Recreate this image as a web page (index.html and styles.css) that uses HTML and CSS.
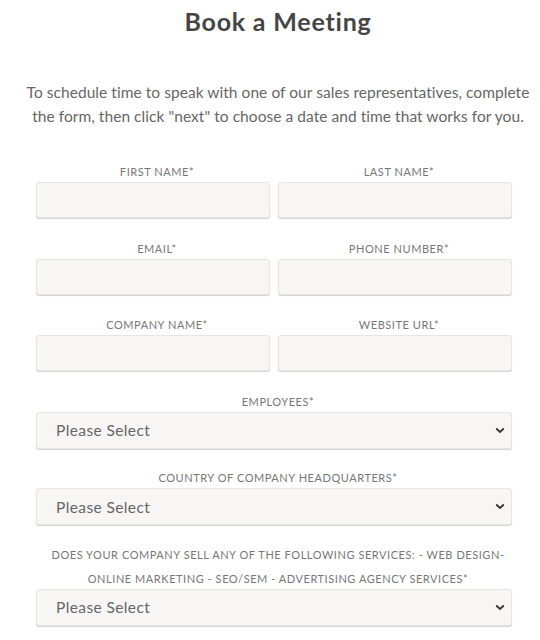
FILE: index.html
```html
<!DOCTYPE html>
<html lang="en">
<head>
<meta charset="utf-8">
<title>Book a Meeting</title>
<link rel="stylesheet" href="styles.css">
</head>
<body>
<div class="page">
  <header class="intro">
    <h1 class="title">Book a Meeting</h1>
    <p class="lead">To schedule time to speak with one of our sales representatives, complete the form, then click "next" to choose a date and time that works for you.</p>
  </header>
  <form class="form">
    <div class="row">
      <div class="field"><label class="label">First Name*</label><input class="input" type="text"></div>
      <div class="field"><label class="label">Last Name*</label><input class="input" type="text"></div>
    </div>
    <div class="row">
      <div class="field"><label class="label">Email*</label><input class="input" type="email"></div>
      <div class="field"><label class="label">Phone Number*</label><input class="input" type="tel"></div>
    </div>
    <div class="row">
      <div class="field"><label class="label">Company Name*</label><input class="input" type="text"></div>
      <div class="field"><label class="label">Website URL*</label><input class="input" type="text"></div>
    </div>
    <div class="field field-select">
      <label class="label">Employees*</label>
      <div class="select-wrap">
        <select class="select"><option>Please Select</option></select>
        <svg class="chev" width="10" height="7" viewBox="0 0 10 7"><path d="M1.2 1.5 L5 5 L8.8 1.5" fill="none" stroke="#333" stroke-width="1.8"/></svg>
      </div>
    </div>
    <div class="field field-select">
      <label class="label">Country of Company Headquarters*</label>
      <div class="select-wrap">
        <select class="select"><option>Please Select</option></select>
        <svg class="chev" width="10" height="7" viewBox="0 0 10 7"><path d="M1.2 1.5 L5 5 L8.8 1.5" fill="none" stroke="#333" stroke-width="1.8"/></svg>
      </div>
    </div>
    <div class="field field-select">
      <label class="label">Does your company sell any of the following services: - Web Design- Online Marketing - SEO/SEM - Advertising Agency Services*</label>
      <div class="select-wrap">
        <select class="select"><option>Please Select</option></select>
        <svg class="chev" width="10" height="7" viewBox="0 0 10 7"><path d="M1.2 1.5 L5 5 L8.8 1.5" fill="none" stroke="#333" stroke-width="1.8"/></svg>
      </div>
    </div>
  </form>
</div>
</body>
</html>
```

FILE: styles.css
```css
* { box-sizing: border-box; }
html, body { margin: 0; padding: 0; background: #fff; }
body {
  font-family: Lato, "Open Sans", Arial, sans-serif;
  color: #666;
  overflow: hidden;
}
.page { width: 540px; }
.intro {
  margin-left: 16px;
  width: 524px;
  text-align: center;
}
.title {
  margin: 0;
  padding-top: 5px;
  font-size: 25px;
  line-height: 32px;
  font-weight: 700;
  letter-spacing: 0.8px;
  color: #454545;
}
.lead {
  margin: 43px 0 0;
  font-size: 15.5px;
  line-height: 24px;
  letter-spacing: 0.05px;
  color: #666;
}
.form {
  margin: 32px 0 0 36px;
  width: 476px;
}
.row {
  display: flex;
  gap: 8px;
}
.row .field { flex: 1; }
.field { margin-bottom: 18.5px; }
.field-select { margin-bottom: 17.5px; }
.label {
  display: block;
  text-align: center;
  padding-left: 8px;
  font-size: 11px;
  line-height: 24px;
  text-transform: uppercase;
  letter-spacing: 0.55px;
  color: #777;
  margin-bottom: -2px;
}
.input, .select {
  display: block;
  width: 100%;
  height: 36px;
  border: 1px solid #e6e5e3;
  border-radius: 3px;
  background: #f7f6f4;
  box-shadow: 0 1px 1px rgba(0,0,0,0.18);
  outline: none;
  margin: 0;
}
.select-wrap { position: relative; }
.select {
  appearance: none;
  -webkit-appearance: none;
  padding: 0 0 0 19px;
  font-family: Lato, "Open Sans", Arial, sans-serif;
  font-size: 15.5px;
  letter-spacing: 0.4px;
  color: #666;
  height: 37px;
}
.chev {
  position: absolute;
  right: 7px;
  top: 15px;
}
```
